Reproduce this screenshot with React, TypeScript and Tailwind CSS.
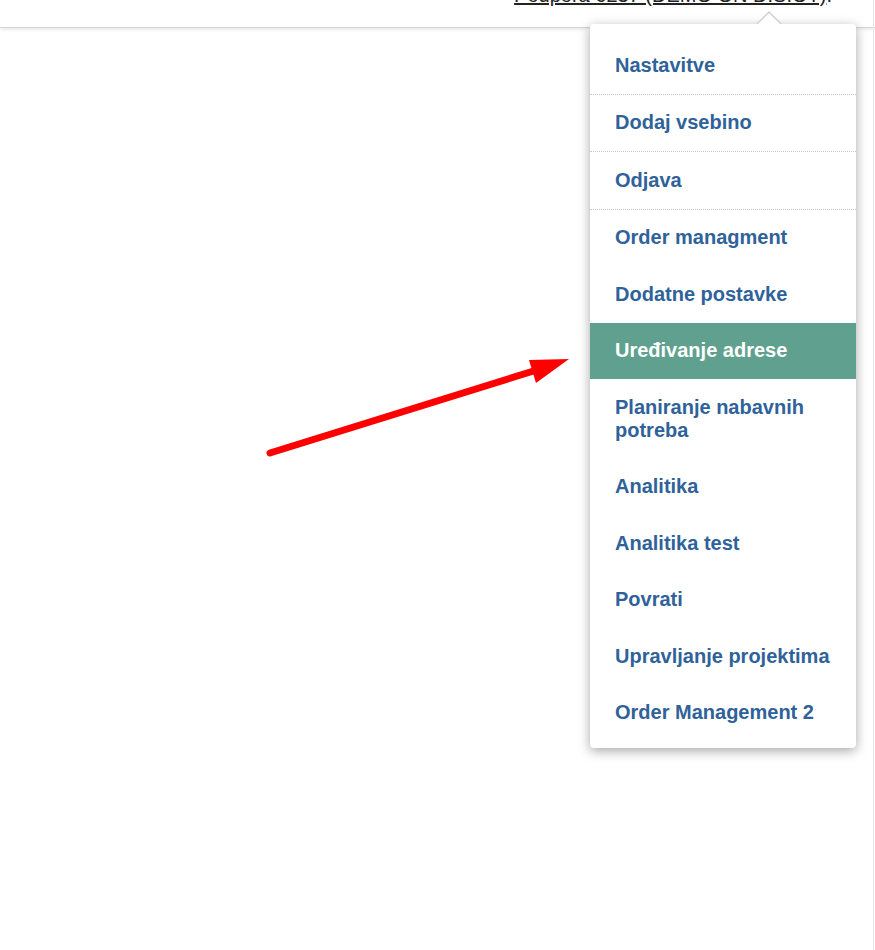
import React from "react";

const items = [
  "Nastavitve",
  "Dodaj vsebino",
  "Odjava",
  "Order managment",
  "Dodatne postavke",
  "Uređivanje adrese",
  "Planiranje nabavnih potreba",
  "Analitika",
  "Analitika test",
  "Povrati",
  "Upravljanje projektima",
  "Order Management 2",
];

const App: React.FC = () => {
  return (
    <div
      className="relative w-[875px] h-[950px] bg-white overflow-hidden"
      style={{ fontFamily: '"Liberation Sans", Arial, sans-serif' }}
    >
      {/* Header bar */}
      <div className="relative h-[28px] border-b border-[#d4d4d4] shadow-[0_2px_3px_rgba(0,0,0,0.08)] overflow-hidden">
        <div className="flex justify-end pr-[43px]">
          <a className="mt-[-15px] text-[20px] leading-[20px] text-[#222] underline">
            Podpora 6237 (DEMO ON DISIOT)
          </a>
          <span className="mt-[-15px] text-[20px] leading-[20px] text-[#222]">.</span>
        </div>
      </div>

      {/* right edge line */}
      <div className="absolute top-0 bottom-0 right-[1px] w-px bg-[#e6e6e6]" />

      {/* Arrow */}
      <svg className="absolute left-0 top-0" width="875" height="950">
        <line x1="270" y1="453" x2="540" y2="369" stroke="#ff0000" strokeWidth="7" strokeLinecap="round" />
        <polygon points="569,359 529,360 536,383" fill="#ff0000" />
      </svg>

      {/* Dropdown */}
      <div className="absolute left-[590px] top-[24px] w-[266px] bg-white rounded-[4px] shadow-[0_3px_12px_rgba(0,0,0,0.35)] pt-[13px] pb-[7px]">
        <div className="absolute -top-[13px] left-[166px] w-0 h-0 border-l-[13px] border-r-[13px] border-b-[13px] border-l-transparent border-r-transparent border-b-[#cfcfcf]" />
        <div className="absolute -top-[11px] left-[168px] w-0 h-0 border-l-[11px] border-r-[11px] border-b-[11px] border-l-transparent border-r-transparent border-b-white" />
        <ul>
          {items.map((label, i) => {
            const active = label === "Uređivanje adrese";
            const bordered = i < 3;
            return (
              <li
                key={label}
                className={`${bordered ? "border-b border-dotted border-[#c8c8c8]" : ""} ${
                  active ? "bg-[#5fa18e] text-white" : "text-[#2f6299]"
                } px-[25px] py-[16.75px] text-[20px] leading-[23px] font-bold`}
              >
                {label}
              </li>
            );
          })}
        </ul>
      </div>
    </div>
  );
};

export default App;
